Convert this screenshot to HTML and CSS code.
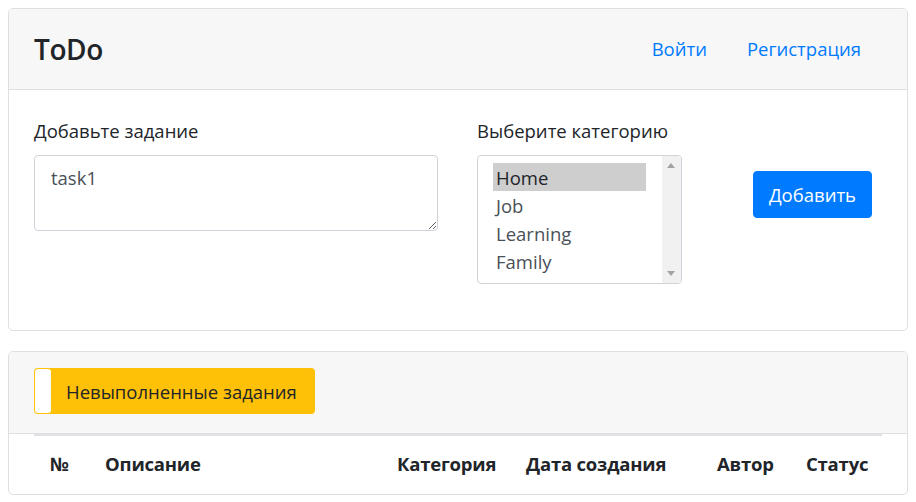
FILE: index.html
```html
<!DOCTYPE html>
<html lang="ru">
<head>
<meta charset="utf-8">
<title>ToDo</title>
<link rel="stylesheet" href="styles.css">
</head>
<body>
<div class="card">
  <div class="card-header nav-header">
    <span class="brand">ToDo</span>
    <nav class="nav">
      <a class="nav-link" href="#">Войти</a>
      <a class="nav-link" href="#">Регистрация</a>
    </nav>
  </div>
  <div class="card-body form-row">
    <div class="field field-task">
      <label class="label">Добавьте задание</label>
      <textarea class="control textarea" rows="2">task1</textarea>
    </div>
    <div class="field field-cat">
      <label class="label">Выберите категорию</label>
      <div class="control listbox">
        <div class="options">
          <div class="option selected">Home</div>
          <div class="option">Job</div>
          <div class="option">Learning</div>
          <div class="option">Family</div>
        </div>
        <div class="scrollbar">
          <span class="arrow up"></span>
          <span class="arrow down"></span>
        </div>
      </div>
    </div>
    <button class="btn">Добавить</button>
  </div>
</div>

<div class="card card-tasks">
  <div class="card-header">
    <span class="badge"><span class="badge-mark"></span><span class="badge-text">Невыполненные задания</span></span>
  </div>
  <div class="table-wrap">
    <table class="table">
      <thead>
        <tr>
          <th class="c-num">№</th>
          <th class="c-desc">Описание</th>
          <th class="c-cat">Категория</th>
          <th class="c-date">Дата создания</th>
          <th class="c-author">Автор</th>
          <th class="c-status">Статус</th>
        </tr>
      </thead>
    </table>
  </div>
</div>
</body>
</html>
```

FILE: styles.css
```css
* { box-sizing: border-box; }
html, body { margin: 0; padding: 0; }
body {
  padding: 8px;
  background: #fff;
  font-family: "Open Sans", "Noto Sans", sans-serif;
  font-size: 18.5px;
  color: #212529;
}
.card {
  border: 1px solid #dfdfdf;
  border-radius: 5px;
  background: #fff;
  overflow: hidden;
}
.card + .card { margin-top: 20px; }
.card-header {
  background: #f7f7f7;
  border-bottom: 1px solid #dfdfdf;
  padding: 15px 25px 15px 25px;
}
.nav-header {
  display: flex;
  align-items: center;
  justify-content: space-between;
  height: 81px;
  padding-top: 0;
  padding-bottom: 0;
  padding-right: 26px;
}
.brand {
  font-size: 28px;
  font-weight: 600;
  color: #212529;
  letter-spacing: -0.4px;
}
.nav { display: flex; }
.nav-link {
  color: #007bff;
  text-decoration: none;
  padding: 0 20px;
  line-height: 30px;
}
.form-row {
  display: flex;
  align-items: flex-start;
  padding: 25px;
  height: 240px;
}
.field { display: flex; flex-direction: column; }
.field-task { width: 404px; }
.field-cat { width: 205px; margin-left: 39px; }
.label {
  line-height: 30px;
  margin-top: 1px;
  margin-bottom: 9px;
}
.control {
  border: 1px solid #ced4da;
  border-radius: 4px;
  color: #495057;
  background: #fff;
}
.textarea {
  font: inherit;
  color: #495057;
  height: 76px;
  padding: 7px 16px;
  line-height: 30px;
  resize: vertical;
  width: 100%;
  outline: none;
}
.listbox {
  height: 129px;
  display: flex;
  overflow: hidden;
}
.options {
  flex: 1;
  padding: 7px 0 0 15px;
}
.option {
  height: 28px;
  line-height: 29px;
  padding: 0 3px;
  margin-right: 16px;
}
.option.selected { background: #cecece; color: #212529; }
.scrollbar {
  width: 19px;
  background: #f1f1f1;
  position: relative;
}
.arrow {
  position: absolute;
  left: 5px;
  width: 0; height: 0;
  border-left: 4.5px solid transparent;
  border-right: 4.5px solid transparent;
}
.arrow.up { top: 7px; border-bottom: 5px solid #a3a3a3; }
.arrow.down { bottom: 7px; border-top: 5px solid #a3a3a3; }
.btn {
  margin-left: 71px;
  margin-top: 56px;
  font: inherit;
  color: #fff;
  background: #007bff;
  border: 1px solid #007bff;
  border-radius: 4px;
  height: 47px;
  width: 119px;
  padding: 0;
  line-height: 30px;
}
.card-tasks { height: 144px; }
.card-tasks .card-header { padding: 16px 25px 15px 25px; }
.badge {
  display: inline-flex;
  align-items: center;
  background: #ffc107;
  border-radius: 4px;
  height: 46px;
  padding: 1px;
}
.badge-mark {
  width: 16px;
  height: 44px;
  background: #fff;
  border-radius: 3px;
}
.badge-text {
  padding: 0 17px 0 15px;
  color: #212529;
}
.table-wrap { padding: 0 25px; }
.table {
  width: 100%;
  border-collapse: collapse;
  table-layout: fixed;
}
.table th {
  text-align: left;
  font-weight: 700;
  padding: 13px 15px 16px 16px;
  line-height: 30px;
  letter-spacing: -0.2px;
  border-top: 2px solid #dee2e6;
  border-bottom: 2px solid #dee2e6;
  white-space: nowrap;
}
.c-num { width: 55px; }
.c-desc { width: 292px; }
.c-cat { width: 129px; }
.c-date { width: 191px; }
.c-author { width: 89px; }
.c-status { width: 92px; }
```
